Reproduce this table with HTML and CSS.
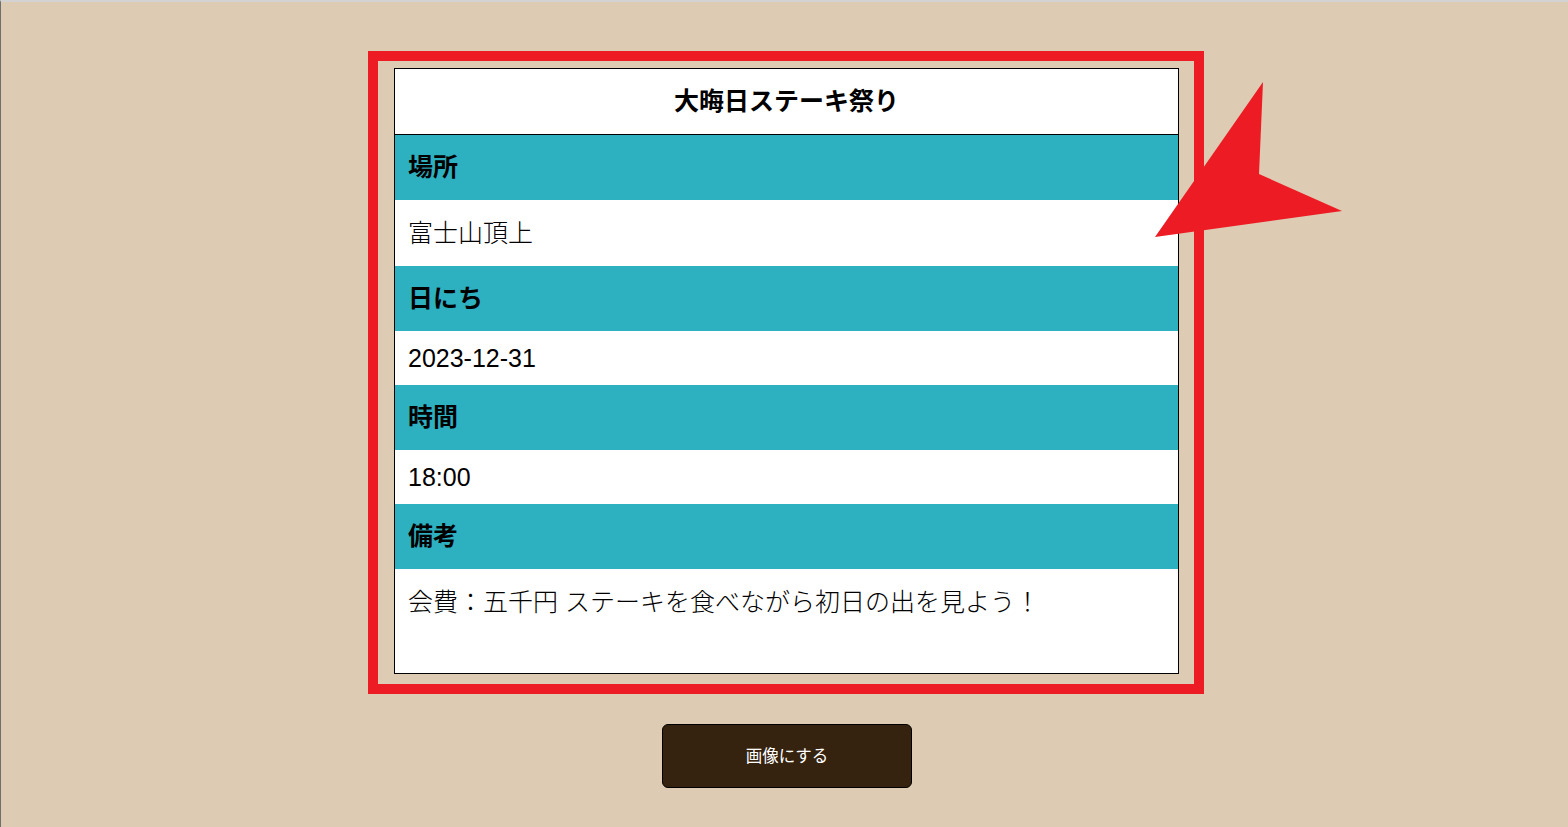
FILE: index.html
```html
<!DOCTYPE html>
<html lang="ja">
<head>
<meta charset="utf-8">
<title>大晦日ステーキ祭り</title>
<link rel="stylesheet" href="styles.css">
</head>
<body>
<div class="page">
  <div class="capture">
    <div class="frame">
      <div class="card">
        <div class="card-title">大晦日ステーキ祭り</div>
        <div class="label">場所</div>
        <div class="value value-jp">富士山頂上</div>
        <div class="label">日にち</div>
        <div class="value value-num">2023-12-31</div>
        <div class="label">時間</div>
        <div class="value value-num">18:00</div>
        <div class="label">備考</div>
        <div class="value value-jp value-note">会費：五千円 ステーキを食べながら初日の出を見よう！</div>
      </div>
    </div>
    <svg class="arrow" width="200" height="165" viewBox="0 0 200 165" aria-hidden="true">
      <polygon points="5,160 113,5 109,97 192,134" fill="#ed1c24"/>
    </svg>
  </div>
  <button class="btn" type="button">画像にする</button>
</div>
</body>
</html>
```
FILE: styles.css
```css
* {
  box-sizing: border-box;
}

html, body {
  margin: 0;
  padding: 0;
  background: #decbb3;
}

body {
  font-family: "Liberation Sans", "Noto Sans CJK JP", sans-serif;
  color: #000;
}

.page {
  min-height: 827px;
  border-top: 2px solid #d3d3d3;
  border-left: 1px solid #6f6f6f;
  padding: 49px 0 0 3px;
  display: flex;
  flex-direction: column;
  align-items: center;
}

.capture {
  position: relative;
}

.frame {
  border: 10px solid #ed1c24;
  padding: 7px 15px 10px 16px;
}

.card {
  width: 785px;
  border: 1px solid #000;
  background: #fff;
  font-size: 25px;
}

.card-title {
  height: 66px;
  line-height: 65px;
  border-bottom: 1px solid #000;
  text-align: center;
  font-weight: 700;
}

.label {
  background: #2db0c0;
  padding: 13px 13px;
  line-height: 39px;
  font-weight: 700;
}

.value {
  padding: 13px 13px;
}

.value-jp {
  line-height: 40px;
  font-weight: 300;
}

.value-num {
  line-height: 28px;
}

.value-note {
  padding-bottom: 51px;
}

.arrow {
  position: absolute;
  left: 782px;
  top: 26px;
}

.btn {
  margin: 30px 0 0 2px;
  width: 250px;
  height: 64px;
  border: 1px solid #000;
  border-radius: 6px;
  background: #35220f;
  color: #fff;
  font-family: "Noto Sans CJK JP", sans-serif;
  font-size: 16.5px;
  padding: 0 0 3px;
}
```
